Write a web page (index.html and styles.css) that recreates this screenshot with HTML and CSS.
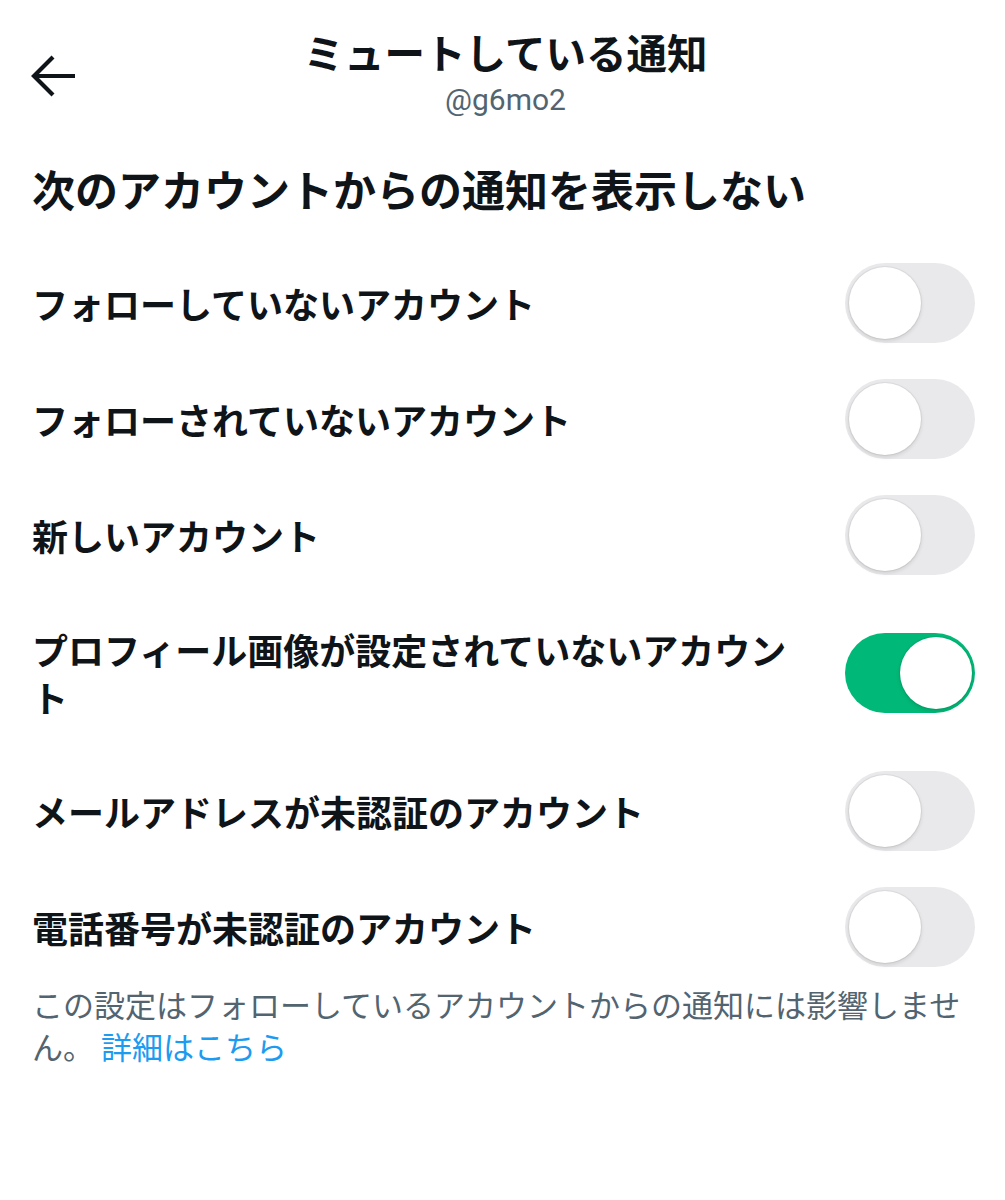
FILE: index.html
```html
<!DOCTYPE html>
<html lang="ja">
<head>
<meta charset="utf-8">
<link rel="stylesheet" href="styles.css">
</head>
<body>
<div class="page">
  <header class="header">
    <div class="back">
      <svg width="48" height="44" viewBox="0 0 48 44"><path d="M45 22H4M23 3L4 22l19 19" fill="none" stroke="#0f1419" stroke-width="4.2" stroke-linecap="butt" stroke-linejoin="miter"/></svg>
    </div>
    <div class="titles">
      <div class="title">ミュートしている通知</div>
      <div class="sub">@g6mo2</div>
    </div>
  </header>
  <h2 class="heading">次のアカウントからの通知を表示しない</h2>
  <div class="list">
    <div class="row"><div class="label">フォローしていないアカウント</div><div class="toggle"><div class="knob"></div></div></div>
    <div class="row"><div class="label">フォローされていないアカウント</div><div class="toggle"><div class="knob"></div></div></div>
    <div class="row"><div class="label">新しいアカウント</div><div class="toggle"><div class="knob"></div></div></div>
    <div class="row"><div class="label">プロフィール画像が設定されていないアカウント</div><div class="toggle on"><div class="knob"></div></div></div>
    <div class="row"><div class="label">メールアドレスが未認証のアカウント</div><div class="toggle"><div class="knob"></div></div></div>
    <div class="row"><div class="label">電話番号が未認証のアカウント</div><div class="toggle"><div class="knob"></div></div></div>
  </div>
  <p class="note">この設定はフォローしているアカウントからの通知には影響しません。 <a class="link" href="#">詳細はこちら</a></p>
</div>
</body>
</html>
```
FILE: styles.css
```css
html, body {
  margin: 0;
  padding: 0;
  background: #ffffff;
}
body {
  font-family: "Noto Sans CJK JP", "Noto Sans", sans-serif;
  color: #0f1419;
}
.page {
  padding: 0 28px 0 32px;
}
.header {
  display: flex;
  align-items: center;
  padding-top: 24px;
  height: 96px;
}
.back {
  width: 48px;
  height: 44px;
  margin-top: 8px;
  margin-left: -2px;
}
.back svg {
  display: block;
}
.titles {
  flex: 1;
  display: flex;
  flex-direction: column;
  align-items: center;
  margin-right: 44px;
  margin-left: 0;
}
.title {
  font-size: 40.5px;
  font-weight: 700;
  line-height: 56px;
}
.sub {
  font-family: "Roboto", "Liberation Sans", sans-serif;
  font-size: 30px;
  line-height: 40px;
  color: #536471;
}
.heading {
  margin: 39px 0 28px;
  font-size: 43px;
  font-weight: 700;
  line-height: 58px;
}
.row {
  display: flex;
  align-items: center;
  min-height: 116px;
  padding-right: 2px;
}
.label {
  flex: 1;
  margin-right: 50px;
  padding: 32px 0;
  font-size: 36px;
  font-weight: 700;
  line-height: 48px;
}
.toggle {
  width: 130px;
  height: 80px;
  border-radius: 40px;
  background: #e9e9eb;
  display: flex;
  align-items: center;
  justify-content: flex-start;
  padding: 0 4px;
  box-sizing: border-box;
  flex-shrink: 0;
}
.toggle.on {
  background: #00b877;
  justify-content: flex-end;
  padding: 0 3px;
}
.knob {
  width: 72px;
  height: 72px;
  border-radius: 50%;
  background: #ffffff;
  box-shadow: 0 2px 4px rgba(0,0,0,0.12), 0 0 0 1px rgba(0,0,0,0.05);
}
.note {
  margin: -2px 0 0;
  font-size: 31px;
  line-height: 42px;
  color: #536471;
}
.link {
  color: #1d9bf0;
  text-decoration: none;
}
```
